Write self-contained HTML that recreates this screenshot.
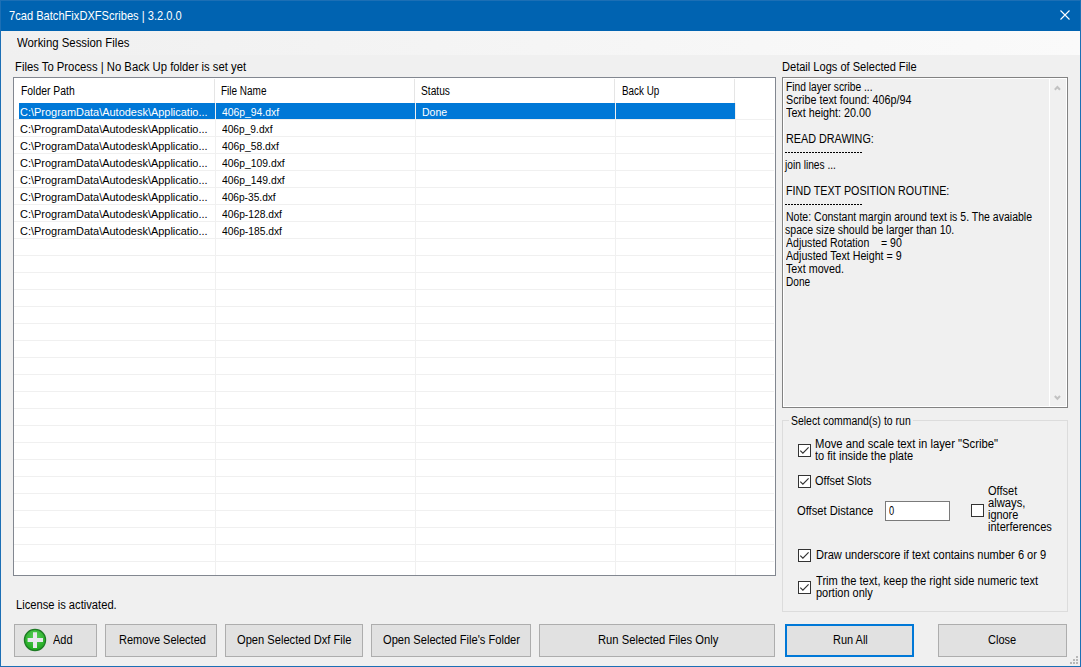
<!DOCTYPE html>
<html><head><meta charset="utf-8"><style>
*{margin:0;padding:0;box-sizing:border-box}
html,body{width:1081px;height:667px;overflow:hidden;background:#f0f0f0}
body{position:relative;font-family:"Liberation Sans",sans-serif}
.a{position:absolute}
.t{position:absolute;white-space:pre;transform-origin:0 0;font-family:"Liberation Sans",sans-serif}
.hl{position:absolute;left:14px;width:760px;height:1px;background:#f0f0f0}
.btn{position:absolute;top:624px;height:33px;background:#e1e1e1;border:1px solid #adadad}
.cb{position:absolute;width:13px;height:13px;background:#fff;border:1px solid #333}
</style></head><body>
<!-- window frame -->
<div class="a" style="left:0;top:0;width:1081px;height:31px;background:#0063b1"></div>
<div class="a" style="left:0;top:0;width:1081px;height:1px;background:#1c6fb5"></div>
<div class="a" style="left:0;top:0;width:1px;height:667px;background:#1c6fb5"></div>
<div class="a" style="left:1080px;top:0;width:1px;height:667px;background:#1c6fb5"></div>
<div class="a" style="left:0;top:666px;width:1081px;height:1px;background:#1c6fb5"></div>
<svg class="a" style="left:1060px;top:10px" width="10" height="10" viewBox="0 0 10 10"><path d="M0.5 0.5L9.5 9.5M9.5 0.5L0.5 9.5" stroke="#fff" stroke-width="1.1"/></svg>
<!-- menu strip -->
<div class="a" style="left:1px;top:31px;width:1079px;height:24px;background:linear-gradient(to right,#f0f0f0,#fafafa)"></div>
<!-- listview -->
<div class="a" style="left:13px;top:77px;width:763px;height:499px;background:#fff;border:1px solid #828790"></div>
<div class="hl" style="top:119px"></div><div class="hl" style="top:136px"></div><div class="hl" style="top:153px"></div><div class="hl" style="top:170px"></div><div class="hl" style="top:187px"></div><div class="hl" style="top:204px"></div><div class="hl" style="top:221px"></div><div class="hl" style="top:238px"></div><div class="hl" style="top:255px"></div><div class="hl" style="top:272px"></div><div class="hl" style="top:289px"></div><div class="hl" style="top:306px"></div><div class="hl" style="top:323px"></div><div class="hl" style="top:340px"></div><div class="hl" style="top:357px"></div><div class="hl" style="top:374px"></div><div class="hl" style="top:391px"></div><div class="hl" style="top:408px"></div><div class="hl" style="top:425px"></div><div class="hl" style="top:442px"></div><div class="hl" style="top:459px"></div><div class="hl" style="top:476px"></div><div class="hl" style="top:493px"></div><div class="hl" style="top:510px"></div><div class="hl" style="top:527px"></div><div class="hl" style="top:544px"></div><div class="hl" style="top:561px"></div>
<div class="a" style="left:214px;top:79px;width:1px;height:24px;background:#e5e5e5"></div>
<div class="a" style="left:414px;top:79px;width:1px;height:24px;background:#e5e5e5"></div>
<div class="a" style="left:614px;top:79px;width:1px;height:24px;background:#e5e5e5"></div>
<div class="a" style="left:734px;top:79px;width:1px;height:24px;background:#e5e5e5"></div>
<div class="a" style="left:215px;top:103px;width:1px;height:472px;background:#f0f0f0"></div>
<div class="a" style="left:415px;top:103px;width:1px;height:472px;background:#f0f0f0"></div>
<div class="a" style="left:615px;top:103px;width:1px;height:472px;background:#f0f0f0"></div>
<div class="a" style="left:735px;top:103px;width:1px;height:472px;background:#f0f0f0"></div>
<div class="a" style="left:19px;top:103px;width:196px;height:16px;background:#0078d7"></div>
<div class="a" style="left:216px;top:103px;width:199px;height:16px;background:#0078d7"></div>
<div class="a" style="left:416px;top:103px;width:199px;height:16px;background:#0078d7"></div>
<div class="a" style="left:616px;top:103px;width:119px;height:16px;background:#0078d7"></div>
<!-- log box -->
<div class="a" style="left:782px;top:77px;width:286px;height:331px;background:#f0f0f0;border:1px solid #828282"></div>
<div class="a" style="left:783px;top:78px;width:284px;height:329px;border:1px solid #fff"></div>
<div class="a" style="left:1049px;top:79px;width:1px;height:327px;background:#fff"></div>
<svg class="a" style="left:1052px;top:84px" width="12" height="8" viewBox="0 0 12 8"><path d="M2.8 5.7L5.4 3L8 5.7" fill="none" stroke="#c2c2c2" stroke-width="2"/></svg>
<svg class="a" style="left:1052px;top:394px" width="12" height="8" viewBox="0 0 12 8"><path d="M2.8 2L5.4 4.7L8 2" fill="none" stroke="#c2c2c2" stroke-width="2"/></svg>
<div class="a" style="left:785px;top:152px;width:78px;height:1px;background:repeating-linear-gradient(to right,#000 0 2px,transparent 2px 3px)"></div>
<div class="a" style="left:785px;top:204px;width:78px;height:1px;background:repeating-linear-gradient(to right,#000 0 2px,transparent 2px 3px)"></div>
<!-- group box -->
<div class="a" style="left:782px;top:420px;width:286px;height:192px;border:1px solid #dcdcdc"></div>
<div class="a" style="left:789px;top:418px;width:124px;height:5px;background:#f0f0f0"></div>
<div class="cb" style="left:798px;top:444px"></div>
<div class="cb" style="left:798px;top:475px"></div>
<div class="cb" style="left:971px;top:504px"></div>
<div class="cb" style="left:798px;top:549px"></div>
<div class="cb" style="left:798px;top:581px"></div>
<svg class="a" style="left:798px;top:444px" width="13" height="13" viewBox="0 0 13 13"><path d="M2.3 6.6L4.9 9.1L10.6 3.4" fill="none" stroke="#333" stroke-width="1.2"/></svg><svg class="a" style="left:798px;top:475px" width="13" height="13" viewBox="0 0 13 13"><path d="M2.3 6.6L4.9 9.1L10.6 3.4" fill="none" stroke="#333" stroke-width="1.2"/></svg><svg class="a" style="left:798px;top:549px" width="13" height="13" viewBox="0 0 13 13"><path d="M2.3 6.6L4.9 9.1L10.6 3.4" fill="none" stroke="#333" stroke-width="1.2"/></svg><svg class="a" style="left:798px;top:581px" width="13" height="13" viewBox="0 0 13 13"><path d="M2.3 6.6L4.9 9.1L10.6 3.4" fill="none" stroke="#333" stroke-width="1.2"/></svg>
<div class="a" style="left:885px;top:501px;width:65px;height:20px;background:#fff;border:1px solid #7a7a7a"></div>
<!-- buttons -->
<div class="btn" style="left:14px;width:83px"></div>
<div class="btn" style="left:105px;width:112px"></div>
<div class="btn" style="left:225px;width:138px"></div>
<div class="btn" style="left:371px;width:160px"></div>
<div class="btn" style="left:539px;width:236px"></div>
<div class="btn" style="left:785px;width:129px;border:2px solid #0078d7"></div>
<div class="btn" style="left:938px;width:129px"></div>
<svg class="a" style="left:23px;top:628px" width="24" height="24" viewBox="0 0 24 24">
<defs><radialGradient id="g" cx="0.5" cy="0.35" r="0.6"><stop offset="0" stop-color="#5ad05a"/><stop offset="1" stop-color="#22aa22"/></radialGradient></defs>
<circle cx="12" cy="12" r="10.6" fill="url(#g)" stroke="#1d7a24" stroke-width="1.2"/>
<path d="M10 4.3h4v5.7h6v4h-6v6h-4v-6h-5.4v-4h5.4z" fill="#e8e8ee"/>
</svg>
<div class="a" style="left:1076px;top:656px;width:2px;height:2px;background:#b8b8b8"></div>
<div class="a" style="left:1073px;top:659px;width:2px;height:2px;background:#b8b8b8"></div>
<div class="a" style="left:1076px;top:659px;width:2px;height:2px;background:#b8b8b8"></div>
<div class="a" style="left:1070px;top:662px;width:2px;height:2px;background:#b8b8b8"></div>
<div class="a" style="left:1073px;top:662px;width:2px;height:2px;background:#b8b8b8"></div>
<div class="a" style="left:1076px;top:662px;width:2px;height:2px;background:#b8b8b8"></div>
<div class="t" style="left:9.00px;top:9px;font-size:13px;line-height:13px;color:#fff;transform:scaleX(0.8546)">7cad BatchFixDXFScribes | 3.2.0.0</div><div class="t" style="left:16.60px;top:37px;font-size:12px;line-height:12px;color:#000;transform:scaleX(0.9486)">Working Session Files</div><div class="t" style="left:15.10px;top:61px;font-size:12px;line-height:12px;color:#000;transform:scaleX(0.9406)">Files To Process | No Back Up folder is set yet</div><div class="t" style="left:781.80px;top:61px;font-size:12px;line-height:12px;color:#000;transform:scaleX(0.9221)">Detail Logs of Selected File</div><div class="t" style="left:21.20px;top:85px;font-size:12px;line-height:12px;color:#000;transform:scaleX(0.8654)">Folder Path</div><div class="t" style="left:221.30px;top:85px;font-size:12px;line-height:12px;color:#000;transform:scaleX(0.8308)">File Name</div><div class="t" style="left:421.30px;top:85px;font-size:12px;line-height:12px;color:#000;transform:scaleX(0.8495)">Status</div><div class="t" style="left:621.50px;top:85px;font-size:12px;line-height:12px;color:#000;transform:scaleX(0.8210)">Back Up</div><div class="t" style="left:19.80px;top:107px;font-size:11.5px;line-height:11.5px;color:#fff;transform:scaleX(0.9528)">C:\ProgramData\Autodesk\Applicatio...</div><div class="t" style="left:221.50px;top:107px;font-size:11.5px;line-height:11.5px;color:#fff;transform:scaleX(0.9016)">406p_94.dxf</div><div class="t" style="left:19.80px;top:124px;font-size:11.5px;line-height:11.5px;color:#000;transform:scaleX(0.9528)">C:\ProgramData\Autodesk\Applicatio...</div><div class="t" style="left:221.50px;top:124px;font-size:11.5px;line-height:11.5px;color:#000;transform:scaleX(0.8871)">406p_9.dxf</div><div class="t" style="left:19.80px;top:141px;font-size:11.5px;line-height:11.5px;color:#000;transform:scaleX(0.9528)">C:\ProgramData\Autodesk\Applicatio...</div><div class="t" style="left:221.50px;top:141px;font-size:11.5px;line-height:11.5px;color:#000;transform:scaleX(0.8984)">406p_58.dxf</div><div class="t" style="left:19.80px;top:158px;font-size:11.5px;line-height:11.5px;color:#000;transform:scaleX(0.9528)">C:\ProgramData\Autodesk\Applicatio...</div><div class="t" style="left:221.50px;top:158px;font-size:11.5px;line-height:11.5px;color:#000;transform:scaleX(0.8992)">406p_109.dxf</div><div class="t" style="left:19.80px;top:175px;font-size:11.5px;line-height:11.5px;color:#000;transform:scaleX(0.9528)">C:\ProgramData\Autodesk\Applicatio...</div><div class="t" style="left:221.50px;top:175px;font-size:11.5px;line-height:11.5px;color:#000;transform:scaleX(0.8992)">406p_149.dxf</div><div class="t" style="left:19.80px;top:192px;font-size:11.5px;line-height:11.5px;color:#000;transform:scaleX(0.9528)">C:\ProgramData\Autodesk\Applicatio...</div><div class="t" style="left:221.50px;top:192px;font-size:11.5px;line-height:11.5px;color:#000;transform:scaleX(0.8839)">406p-35.dxf</div><div class="t" style="left:19.80px;top:209px;font-size:11.5px;line-height:11.5px;color:#000;transform:scaleX(0.9528)">C:\ProgramData\Autodesk\Applicatio...</div><div class="t" style="left:221.50px;top:209px;font-size:11.5px;line-height:11.5px;color:#000;transform:scaleX(0.8934)">406p-128.dxf</div><div class="t" style="left:19.80px;top:226px;font-size:11.5px;line-height:11.5px;color:#000;transform:scaleX(0.9528)">C:\ProgramData\Autodesk\Applicatio...</div><div class="t" style="left:221.50px;top:226px;font-size:11.5px;line-height:11.5px;color:#000;transform:scaleX(0.8934)">406p-185.dxf</div><div class="t" style="left:421.50px;top:107px;font-size:11.5px;line-height:11.5px;color:#fff;transform:scaleX(0.9152)">Done</div><div class="t" style="left:785.80px;top:81px;font-size:12px;line-height:12px;color:#000;transform:scaleX(0.8532)">Find layer scribe ...</div><div class="t" style="left:785.80px;top:94px;font-size:12px;line-height:12px;color:#000;transform:scaleX(0.8951)">Scribe text found: 406p/94</div><div class="t" style="left:785.50px;top:107px;font-size:12px;line-height:12px;color:#000;transform:scaleX(0.8973)">Text height: 20.00</div><div class="t" style="left:785.80px;top:133px;font-size:12px;line-height:12px;color:#000;transform:scaleX(0.9000)">READ DRAWING:</div><div class="t" style="left:785.35px;top:159px;font-size:12px;line-height:12px;color:#000;transform:scaleX(0.8485)">join lines ...</div><div class="t" style="left:785.80px;top:185px;font-size:12px;line-height:12px;color:#000;transform:scaleX(0.8929)">FIND TEXT POSITION ROUTINE:</div><div class="t" style="left:785.50px;top:211px;font-size:12px;line-height:12px;color:#000;transform:scaleX(0.8768)">Note: Constant margin around text is 5. The avaiable</div><div class="t" style="left:785.20px;top:224px;font-size:12px;line-height:12px;color:#000;transform:scaleX(0.8781)">space size should be larger than 10.</div><div class="t" style="left:785.50px;top:237px;font-size:12px;line-height:12px;color:#000;transform:scaleX(0.8790)">Adjusted Rotation    = 90</div><div class="t" style="left:785.50px;top:250px;font-size:12px;line-height:12px;color:#000;transform:scaleX(0.8880)">Adjusted Text Height = 9</div><div class="t" style="left:785.50px;top:263px;font-size:12px;line-height:12px;color:#000;transform:scaleX(0.8950)">Text moved.</div><div class="t" style="left:785.80px;top:276px;font-size:12px;line-height:12px;color:#000;transform:scaleX(0.8410)">Done</div><div class="t" style="left:791.30px;top:415px;font-size:12px;line-height:12px;color:#000;transform:scaleX(0.8712)">Select command(s) to run</div><div class="t" style="left:815.40px;top:438px;font-size:12px;line-height:12px;color:#000;transform:scaleX(0.9406)">Move and scale text in layer "Scribe"</div><div class="t" style="left:815.40px;top:450px;font-size:12px;line-height:12px;color:#000;transform:scaleX(0.9200)">to fit inside the plate</div><div class="t" style="left:815.40px;top:475px;font-size:12px;line-height:12px;color:#000;transform:scaleX(0.9142)">Offset Slots</div><div class="t" style="left:797.20px;top:505px;font-size:12px;line-height:12px;color:#000;transform:scaleX(0.9313)">Offset Distance</div><div class="t" style="left:888.80px;top:505px;font-size:12px;line-height:12px;color:#000;transform:scaleX(0.7714)">0</div><div class="t" style="left:988.20px;top:485px;font-size:12px;line-height:12px;color:#000;transform:scaleX(0.9181)">Offset</div><div class="t" style="left:988.20px;top:497px;font-size:12px;line-height:12px;color:#000;transform:scaleX(0.9350)">always,</div><div class="t" style="left:988.20px;top:509px;font-size:12px;line-height:12px;color:#000;transform:scaleX(0.9085)">ignore</div><div class="t" style="left:988.20px;top:521px;font-size:12px;line-height:12px;color:#000;transform:scaleX(0.9197)">interferences</div><div class="t" style="left:815.60px;top:549px;font-size:12px;line-height:12px;color:#000;transform:scaleX(0.9228)">Draw underscore if text contains number 6 or 9</div><div class="t" style="left:815.60px;top:575px;font-size:12px;line-height:12px;color:#000;transform:scaleX(0.9267)">Trim the text, keep the right side numeric text</div><div class="t" style="left:815.60px;top:587px;font-size:12px;line-height:12px;color:#000;transform:scaleX(0.9139)">portion only</div><div class="t" style="left:15.60px;top:599px;font-size:12px;line-height:12px;color:#000;transform:scaleX(0.9320)">License is activated.</div><div class="t" style="left:53.20px;top:634px;font-size:12px;line-height:12px;color:#000;transform:scaleX(0.9140)">Add</div><div class="t" style="left:118.50px;top:634px;font-size:12px;line-height:12px;color:#000;transform:scaleX(0.9177)">Remove Selected</div><div class="t" style="left:237.20px;top:634px;font-size:12px;line-height:12px;color:#000;transform:scaleX(0.9271)">Open Selected Dxf File</div><div class="t" style="left:382.50px;top:634px;font-size:12px;line-height:12px;color:#000;transform:scaleX(0.9275)">Open Selected File's Folder</div><div class="t" style="left:597.50px;top:634px;font-size:12px;line-height:12px;color:#000;transform:scaleX(0.9346)">Run Selected Files Only</div><div class="t" style="left:832.50px;top:634px;font-size:12px;line-height:12px;color:#000;transform:scaleX(0.9154)">Run All</div><div class="t" style="left:988.40px;top:634px;font-size:12px;line-height:12px;color:#000;transform:scaleX(0.9192)">Close</div>
</body></html>
